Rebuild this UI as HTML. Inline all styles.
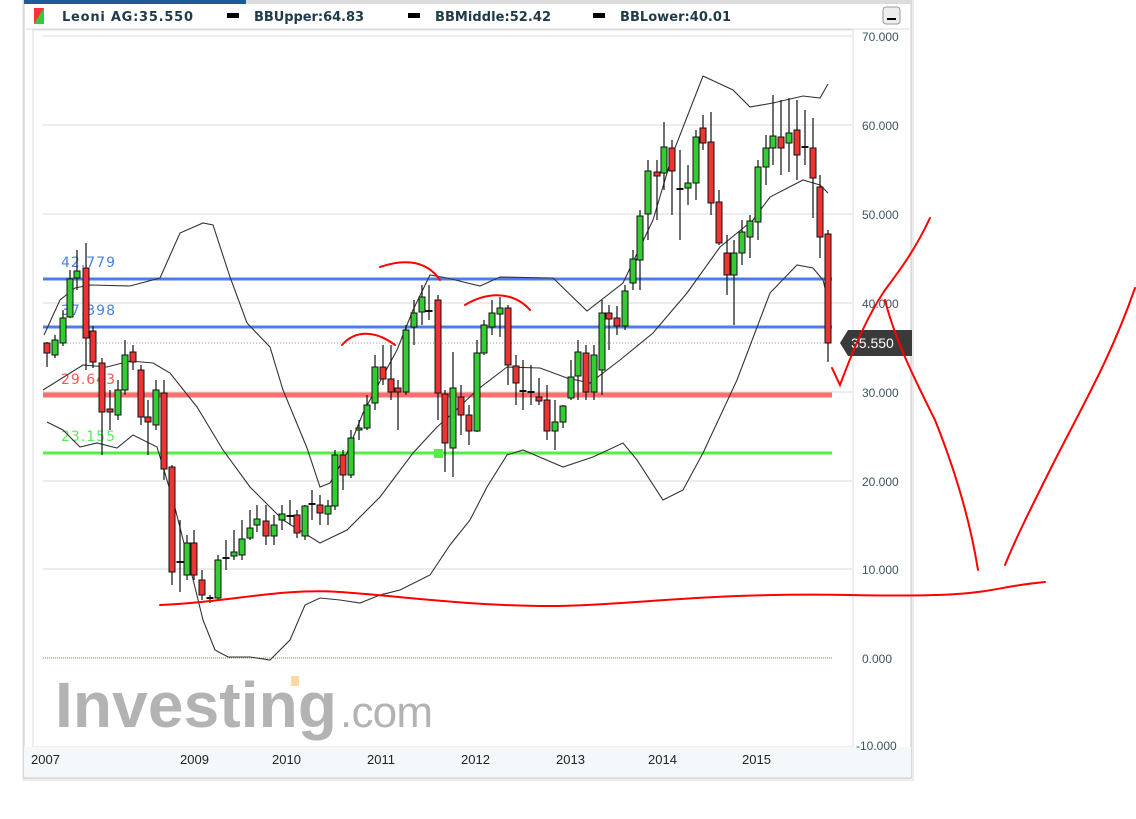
<!DOCTYPE html><html><head><style>
body{margin:0;background:#fff;width:1136px;height:819px;overflow:hidden;font-family:"Liberation Sans",sans-serif}
</style></head><body>
<svg width="1136" height="819" xmlns="http://www.w3.org/2000/svg" style="position:absolute;left:0;top:0">
<rect x="22" y="0" width="892" height="781" fill="#ececec"/>
<rect x="24" y="0" width="887" height="778" fill="#fff" stroke="#c8c8c8"/>
<rect x="24" y="0" width="222" height="4" fill="#1f5a9a"/>
<rect x="246" y="0" width="665" height="4" fill="#dcdcdc"/>
<rect x="34" y="8" width="10" height="16" fill="#3c3"/>
<polygon points="34,8 44,8 34,24" fill="#f33"/>
<g font-weight="bold" font-size="13" fill="#1f3a48" font-family="DejaVu Sans,sans-serif">
<text x="62" y="21" textLength="131">Leoni AG:35.550</text>
<rect x="227" y="13" width="12" height="5" fill="#000"/><text x="254" y="21" textLength="110">BBUpper:64.83</text>
<rect x="408" y="13" width="12" height="5" fill="#000"/><text x="435" y="21" textLength="116">BBMiddle:52.42</text>
<rect x="593" y="13" width="12" height="5" fill="#000"/><text x="620" y="21" textLength="111">BBLower:40.01</text>
</g>
<rect x="883" y="7" width="17" height="17" rx="3" fill="#eee" stroke="#999"/><rect x="887" y="18" width="9" height="2" fill="#000"/>
<line x1="25" y1="29" x2="910" y2="29" stroke="#ddd"/>
<rect x="33" y="30" width="820" height="717" fill="#fff" stroke="#ddd"/>
<rect x="24" y="747" width="887" height="30" fill="#f4f8fb"/>
<g stroke="#e0e0e0" stroke-width="1.3">
<line x1="43" x2="852" y1="36" y2="36"/><line x1="43" x2="852" y1="125" y2="125"/><line x1="43" x2="852" y1="214" y2="214"/><line x1="43" x2="852" y1="303" y2="303"/><line x1="43" x2="852" y1="392" y2="392"/><line x1="43" x2="852" y1="481" y2="481"/><line x1="43" x2="852" y1="569" y2="569"/>
</g>
<line x1="43" x2="832" y1="658" y2="658" stroke="#f44" stroke-dasharray="1,1"/>
<line x1="43" x2="832" y1="343" y2="343" stroke="#999" stroke-dasharray="1,2"/>
<text x="55" y="727" font-size="64" font-weight="bold" fill="#b3b3b3" textLength="280" letter-spacing="-2">Investing</text>
<rect x="291" y="676" width="8" height="10" fill="#fbd9a0"/>
<text x="340" y="727" font-size="44" fill="#b3b3b3" textLength="93">.com</text>
<g font-size="12" fill="#3b5560">
<text x="862" y="41">70.000</text><text x="862" y="130">60.000</text><text x="862" y="219">50.000</text><text x="862" y="308">40.000</text><text x="862" y="397">30.000</text><text x="862" y="486">20.000</text><text x="862" y="574">10.000</text><text x="862" y="663">0.000</text><text x="856" y="750">-10.000</text>
</g>
<g font-size="13" fill="#222">
<text x="31" y="764">2007</text><text x="180" y="764">2009</text><text x="272" y="764">2010</text><text x="367" y="764">2011</text><text x="461" y="764">2012</text><text x="556" y="764">2013</text><text x="648" y="764">2014</text><text x="742" y="764">2015</text>
</g>
<line x1="43" x2="832" y1="279" y2="279" stroke="#4a7fe8" stroke-width="3"/>
<line x1="43" x2="832" y1="327" y2="327" stroke="#4a7fe8" stroke-width="3"/>
<line x1="43" x2="832" y1="395" y2="395" stroke="#ff5555" stroke-width="5" opacity=".85"/>
<line x1="43" x2="832" y1="453" y2="453" stroke="#55ee44" stroke-width="3"/>
<rect x="434" y="449" width="9" height="9" fill="#55ee44"/>
<g font-size="14" font-family="DejaVu Sans,sans-serif">
<text x="61" y="267" fill="#4a7fe8" textLength="54">42.779</text><text x="61" y="315" fill="#4a7fe8" textLength="54">37.398</text><text x="61" y="384" fill="#f55" textLength="54">29.643</text><text x="61" y="441" fill="#5e5" textLength="54">23.155</text>
</g>
<g fill="none" stroke="#333" stroke-width="1.1">
<polyline points="44,335 60,300 75,288 90,285 130,286 160,278 180,233 203,223 213,225 230,277 247,323 270,347 283,390 307,448 320,487 330,483 347,453 363,413 397,350 413,310 430,275 447,278 480,286 500,277 553,278 587,311 623,283 653,220 673,153 703,76 733,90 750,107 773,103 803,96 820,98 828,84"/>
<polyline points="43,390 83,365 107,367 130,361 153,363 170,373 197,407 223,450 250,487 283,520 320,543 347,530 380,497 413,453 437,427 453,413 477,390 507,367 540,368 567,378 590,383 620,360 653,333 687,293 720,247 753,220 770,197 803,180 820,185 828,193"/>
<polyline points="47,422 63,430 80,447 97,443 117,448 133,435 157,447 173,500 190,567 203,620 215,650 228,657 250,657 270,660 290,640 305,605 320,598 340,600 360,603 380,595 400,590 430,575 450,545 470,520 487,487 507,455 523,450 563,467 593,457 623,443 637,460 663,500 683,490 703,453 737,380 770,293 797,265 813,268 823,280 828,300"/>
</g>
<g id="c"></g>
<polygon points="840,343 848,330 912,330 912,356 848,356" fill="#3a3a3a"/>
<text x="851" y="348" font-size="14" fill="#fff">35.550</text>
<g fill="none" stroke="#f00" stroke-width="2" stroke-linecap="round">
<path d="M160,605 C230,602 280,588 340,592 S460,605 540,606 S700,592 850,595 S980,588 1045,582"/>
<path d="M930,218 C915,250 900,270 885,290 C868,315 855,345 840,385 L832,368"/>
<path d="M885,300 C895,340 915,380 935,420 C955,470 970,520 978,570"/>
<path d="M1005,565 C1015,540 1030,510 1050,470 C1080,410 1110,360 1135,288"/>
<path d="M342,345 C355,330 375,330 395,345"/>
<path d="M380,267 C400,260 425,258 440,280"/>
<path d="M465,305 C490,290 515,293 530,310"/>
</g>
</svg>
<script>
var d=[[47,343,353,342,367],[55,355,340,335,358],[63,343,318,310,346],[70,317,279,270,318],[77,278,271,250,290],[86,268,338,243,370],[93,331,362,326,368],[102,363,412,358,455],[110,409,412,390,430],[118,415,390,380,420],[125,390,355,340,395],[133,352,362,345,370],[141,370,417,365,425],[148,417,422,400,455],[156,425,390,380,430],[164,393,469,380,480],[172,467,572,465,585],[180,562,562,520,592],[187,575,543,535,580],[194,543,575,530,580],[202,580,595,570,600],[210,598,598,595,603],[218,598,560,555,600],[226,558,558,540,570],[234,556,552,530,560],[242,555,539,520,560],[250,538,528,510,540],[257,525,519,505,532],[266,521,536,505,545],[274,536,525,515,545],[282,520,514,505,530],[290,516,516,500,525],[297,515,533,510,538],[305,536,506,505,540],[312,504,504,490,520],[320,505,513,495,525],[328,514,506,500,525],[335,506,455,450,510],[343,455,475,450,490],[351,475,438,430,478],[359,430,428,420,440],[367,428,405,395,430],[375,403,367,355,410],[383,367,379,345,385],[391,379,392,345,400],[398,388,392,380,430],[406,392,330,325,395],[414,327,313,300,345],[422,312,297,285,325],[429,311,311,285,320],[438,300,393,295,420],[445,394,443,390,472],[453,448,388,352,477],[461,397,415,385,435],[469,415,431,405,445],[477,431,353,340,432],[484,353,325,320,355],[492,327,313,300,335],[500,314,308,297,337],[508,308,365,305,385],[516,366,383,355,405],[523,391,391,360,410],[531,392,392,365,405],[539,397,401,378,405],[547,400,431,385,440],[555,431,422,400,450],[563,422,406,405,428],[571,398,377,360,400],[578,376,352,340,400],[586,353,392,345,400],[594,392,355,345,400],[602,370,313,300,395],[609,313,319,305,350],[617,318,326,306,335],[625,326,291,285,330],[633,283,259,250,290],[640,260,216,210,290],[648,214,171,160,240],[657,172,176,160,220],[664,173,147,122,190],[672,148,171,140,215],[680,189,189,150,240],[688,188,183,165,205],[696,183,137,130,200],[703,128,143,115,150],[711,142,203,112,215],[719,202,243,190,245],[727,253,275,235,295],[734,275,253,240,325],[742,253,232,220,265],[750,237,221,215,258],[758,222,167,160,240],[766,167,148,135,185],[773,148,136,95,165],[781,137,148,100,175],[789,143,133,98,172],[797,130,155,100,180],[805,147,147,110,165],[813,148,178,118,218],[820,187,237,175,258],[828,234,343,230,362]];
var g=document.getElementById('c'),s='';
d.forEach(function(a){var x=a[0],o=a[1],c=a[2],t=Math.min(o,c),b=Math.max(o,c),up=c<o;
s+='<line x1="'+x+'" x2="'+x+'" y1="'+a[3]+'" y2="'+a[4]+'" stroke="#111" stroke-width="1.2"/>';
if(b-t<2){s+='<rect x="'+(x-3.5)+'" y="'+(t-1)+'" width="7" height="2" fill="#111"/>';}
else s+='<rect x="'+(x-3)+'" y="'+t+'" width="6" height="'+(b-t)+'" fill="'+(up?'#3c3':'#e33')+'" stroke="#111" stroke-width="1"/>';});
g.innerHTML=s;
</script>
</body></html>
